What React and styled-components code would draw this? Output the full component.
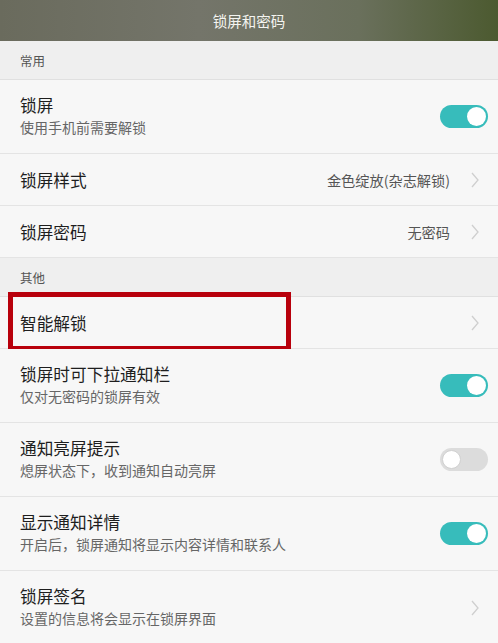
import styled, { createGlobalStyle } from "styled-components"

const Global = createGlobalStyle`
  body {
    margin: 0;
    background: #f7f7f7;
    font-family: "Noto Sans CJK SC", "Noto Sans", sans-serif;
  }
`

const Page = styled.div`
  width: 498px;
  height: 643px;
  overflow: hidden;
  background: #f7f7f7;
`

const Header = styled.div`
  height: 41px;
  display: flex;
  align-items: center;
  justify-content: center;
  color: #f4f4f0;
  font-size: 14.5px;
  background: linear-gradient(90deg, #6a6b5d 0%, #74756a 40%, #6a705c 72%, #4c5a30 100%);
`

const Section = styled.div`
  height: 38px;
  display: flex;
  align-items: center;
  padding-left: 20px;
  background: #efefef;
  border-bottom: 1px solid #e0e0e0;
  color: #555;
  font-size: 12.5px;
`

const Row = styled.div`
  position: relative;
  height: ${props => props.tall ? 73 : 51}px;
  display: flex;
  align-items: center;
  padding: 0 18px 0 20px;
  border-bottom: 1px solid #e4e4e4;
  background: #f7f7f7;
`

const Texts = styled.div`
  flex: 1;
  display: flex;
  flex-direction: column;
  gap: 3px;
  margin-top: ${props => props.tall ? -2 : 0}px;
`

const Title = styled.div`
  font-size: 16.7px;
  color: #1e1e1e;
  line-height: 20px;
`

const Sub = styled.div`
  font-size: 14px;
  color: #666;
  line-height: 18px;
`

const Value = styled.div`
  font-size: 14.2px;
  color: #555;
  margin-right: 20px;
`

const Chevron = () => (
  <svg width="10" height="18" viewBox="0 0 10 18">
    <path d="M2 2 L8 9 L2 16" fill="none" stroke="#cfcfcf" strokeWidth="1.3" />
  </svg>
)

const Track = styled.div`
  width: 48px;
  height: 23px;
  border-radius: 12px;
  box-sizing: border-box;
  display: flex;
  align-items: center;
  justify-content: ${props => props.on ? 'flex-end' : 'flex-start'};
  padding: 0 2px;
  margin-right: -8px;
  background: ${props => props.on ? '#37bcbb' : '#dcdcdc'};
`

const Knob = styled.div`
  width: 19px;
  height: 19px;
  border-radius: 50%;
  background: #fff;
  box-sizing: border-box;
  border: ${props => props.on ? 'none' : '1px solid #d0d0d0'};
`

const Toggle = ({ on }) => (
  <Track on={on}>
    <Knob on={on} />
  </Track>
)

const Highlight = styled.div`
  position: absolute;
  left: 8px;
  top: -5px;
  width: 283px;
  height: 59px;
  box-sizing: border-box;
  border: 5px solid #b8000c;
`

const Item = ({ title, sub, value, toggle, arrow, highlight }) => (
  <Row tall={!!sub}>
    {highlight && <Highlight />}
    <Texts tall={!!sub}>
      <Title>{title}</Title>
      {sub && <Sub>{sub}</Sub>}
    </Texts>
    {value && <Value>{value}</Value>}
    {toggle !== undefined && <Toggle on={toggle} />}
    {arrow && <Chevron />}
  </Row>
)

const App = () => (
  <Page>
    <Global />
    <Header>锁屏和密码</Header>
    <Section>常用</Section>
    <Item title="锁屏" sub="使用手机前需要解锁" toggle={true} />
    <Item title="锁屏样式" value="金色绽放(杂志解锁)" arrow />
    <Item title="锁屏密码" value="无密码" arrow />
    <Section>其他</Section>
    <Item title="智能解锁" arrow highlight />
    <Item title="锁屏时可下拉通知栏" sub="仅对无密码的锁屏有效" toggle={true} />
    <Item title="通知亮屏提示" sub="熄屏状态下，收到通知自动亮屏" toggle={false} />
    <Item title="显示通知详情" sub="开启后，锁屏通知将显示内容详情和联系人" toggle={true} />
    <Item title="锁屏签名" sub="设置的信息将会显示在锁屏界面" arrow />
  </Page>
)

export default App
